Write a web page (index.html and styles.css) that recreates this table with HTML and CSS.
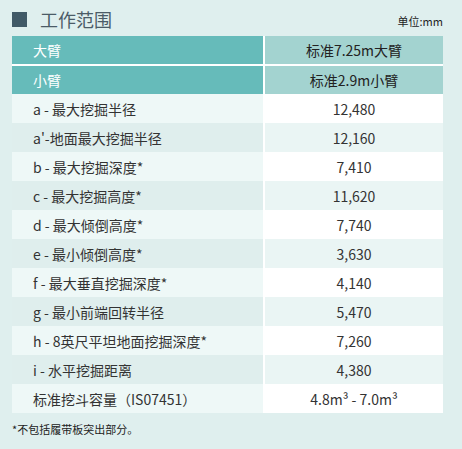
FILE: index.html
```html
<!DOCTYPE html>
<html lang="zh">

<head>
    <meta charset="UTF-8">
    <meta name="viewport" content="width=device-width, initial-scale=1.0">
    <title>工作范围</title>
    <link rel="stylesheet" href="styles.css">
</head>

<body>
    <div class="container">
        <div class="section-head">
            <span class="head-mark"></span>
            <h2 class="head-title">工作范围</h2>
            <span class="head-unit">单位:mm</span>
        </div>

        <table class="spec-table">
            <thead>
                <tr class="row-top">
                    <th class="cell-label">大臂</th>
                    <th class="cell-value">标准7.25m大臂</th>
                </tr>
                <tr>
                    <th class="cell-label">小臂</th>
                    <th class="cell-value">标准2.9m小臂</th>
                </tr>
            </thead>
            <tbody>
                <tr>
                    <td class="cell-label">a - 最大挖掘半径</td>
                    <td class="cell-value">12,480</td>
                </tr>
                <tr>
                    <td class="cell-label">a'-地面最大挖掘半径</td>
                    <td class="cell-value">12,160</td>
                </tr>
                <tr>
                    <td class="cell-label">b - 最大挖掘深度*</td>
                    <td class="cell-value">7,410</td>
                </tr>
                <tr>
                    <td class="cell-label">c - 最大挖掘高度*</td>
                    <td class="cell-value">11,620</td>
                </tr>
                <tr>
                    <td class="cell-label">d - 最大倾倒高度*</td>
                    <td class="cell-value">7,740</td>
                </tr>
                <tr>
                    <td class="cell-label">e - 最小倾倒高度*</td>
                    <td class="cell-value">3,630</td>
                </tr>
                <tr>
                    <td class="cell-label">f - 最大垂直挖掘深度*</td>
                    <td class="cell-value">4,140</td>
                </tr>
                <tr>
                    <td class="cell-label">g - 最小前端回转半径</td>
                    <td class="cell-value">5,470</td>
                </tr>
                <tr>
                    <td class="cell-label">h - 8英尺平坦地面挖掘深度*</td>
                    <td class="cell-value">7,260</td>
                </tr>
                <tr>
                    <td class="cell-label">i - 水平挖掘距离</td>
                    <td class="cell-value">4,380</td>
                </tr>
                <tr>
                    <td class="cell-label">标准挖斗容量（IS07451）</td>
                    <td class="cell-value">4.8m³ - 7.0m³</td>
                </tr>
            </tbody>
        </table>

        <p class="footnote">*不包括履带板突出部分。</p>
    </div>
</body>

</html>
```

FILE: styles.css
```css
body {
    margin: 0;
    background-color: #dfefee;
    font-family: "Noto Sans CJK SC", "Liberation Sans", sans-serif;
    color: #333;
}

.container {
    padding: 7px 19px 0 12px;
}

.section-head {
    display: flex;
    align-items: center;
    height: 24px;
    margin-bottom: 5px;
}

.head-mark {
    width: 15px;
    height: 15px;
    background-color: #415a67;
    margin-right: 13px;
}

.head-title {
    margin: 0;
    font-size: 18px;
    font-weight: normal;
    line-height: 24px;
    color: #4b5c67;
    flex: 1;
}

.head-unit {
    font-size: 11px;
    color: #222;
    margin-top: 4px;
}

.spec-table {
    width: 431px;
    border-collapse: collapse;
    font-size: 14px;
}

.spec-table th,
.spec-table td {
    padding: 0;
    font-weight: normal;
    height: 29px;
}

.spec-table th {
    height: 28px;
}

.spec-table .cell-label {
    width: 230px;
    text-align: left;
    padding-left: 21px;
    border-right: 2px solid #fff;
}

.spec-table .cell-value {
    text-align: center;
}

.spec-table thead .cell-label {
    background-color: #66bbba;
    color: #fff;
}

.spec-table thead .cell-value {
    background-color: #a3d3d0;
    color: #222;
}

.row-top th {
    border-bottom: 2px solid #fff;
}

.spec-table tbody tr:nth-child(odd) .cell-label {
    background-color: #eef8f7;
}

.spec-table tbody tr:nth-child(odd) .cell-value {
    background-color: #ffffff;
}

.spec-table tbody tr:nth-child(even) .cell-label {
    background-color: #dfeeed;
}

.spec-table tbody tr:nth-child(even) .cell-value {
    background-color: #eaf5f4;
}

.footnote {
    margin: 8px 0 0;
    font-size: 11px;
    color: #222;
}
```
